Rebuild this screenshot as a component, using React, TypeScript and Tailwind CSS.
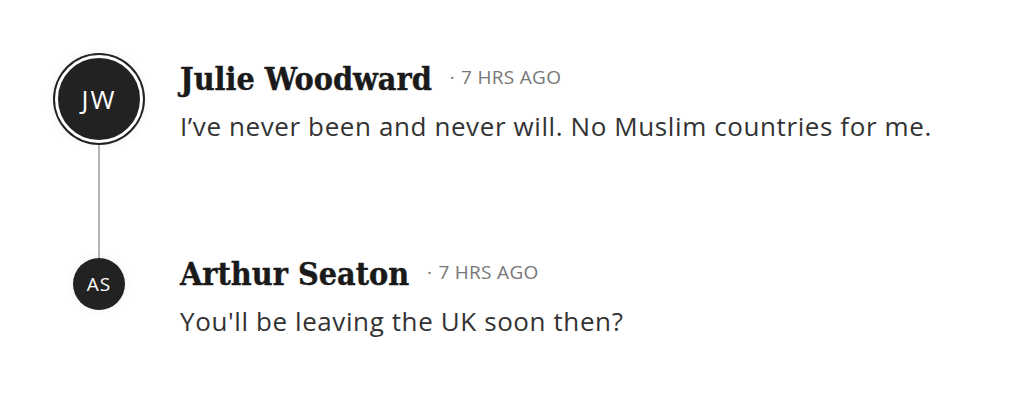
import React from 'react';

type Comment = {
    initials: string;
    name: string;
    time: string;
    body: string;
};

const comments: Comment[] = [
    { initials: 'JW', name: 'Julie Woodward', time: '7 HRS AGO', body: 'I\u2019ve never been and never will. No Muslim countries for me.' },
    { initials: 'AS', name: 'Arthur Seaton', time: '7 HRS AGO', body: "You'll be leaving the UK soon then?" },
];

const Header = ({ c }: { c: Comment }) => (
    <div className="flex items-center h-[40px]">
        <span className="font-['DejaVu_Serif_Condensed','DejaVu_Serif',serif] font-stretch-condensed font-bold text-[32px] leading-[40px] text-[#1a1a1a] [-webkit-text-stroke:0.4px_#1a1a1a]">
            {c.name}
        </span>
        <span className="ml-[18px] -mt-[4px] font-['Open_Sans',sans-serif] text-[19px] tracking-[0.3px] text-[#777777]">
            <span className="mr-[6px]">·</span>{c.time}
        </span>
    </div>
);

const Body = ({ text }: { text: string }) => (
    <p className="mt-[10px] font-['Open_Sans',sans-serif] text-[26px] leading-[34px] tracking-[0.6px] text-[#333333]">{text}</p>
);

export default function App() {
    const [parent, reply] = comments;
    return (
        <div className="w-[1012px] h-[410px] bg-white pt-[53px] pl-[53px]">
            {/* parent comment with thread line */}
            <div className="flex h-[205px]">
                <div className="w-[92px] flex flex-col items-center">
                    <div className="w-[92px] h-[92px] rounded-full bg-[#222222] p-[2px] shadow-[0_0_10px_rgba(0,0,0,0.06)]">
                        <div className="w-full h-full rounded-full border-[3px] border-white bg-[#222222] flex items-center justify-center">
                            <span className="font-['Open_Sans',sans-serif] text-[26px] text-white tracking-[2px]">{parent.initials}</span>
                        </div>
                    </div>
                    <div className="w-[2px] flex-1 bg-[#b5b5b5]" />
                </div>
                <div className="ml-[35px] pt-[6px]">
                    <Header c={parent} />
                    <Body text={parent.body} />
                </div>
            </div>

            {/* reply */}
            <div className="flex">
                <div className="w-[92px] flex justify-center">
                    <div className="w-[52px] h-[52px] rounded-full bg-[#222222] flex items-center justify-center shadow-[0_0_10px_rgba(0,0,0,0.06)]">
                        <span className="font-['Open_Sans',sans-serif] text-[19px] text-white tracking-[1px]">{reply.initials}</span>
                    </div>
                </div>
                <div className="ml-[35px] -mt-[4px]">
                    <Header c={reply} />
                    <Body text={reply.body} />
                </div>
            </div>
        </div>
    );
}
